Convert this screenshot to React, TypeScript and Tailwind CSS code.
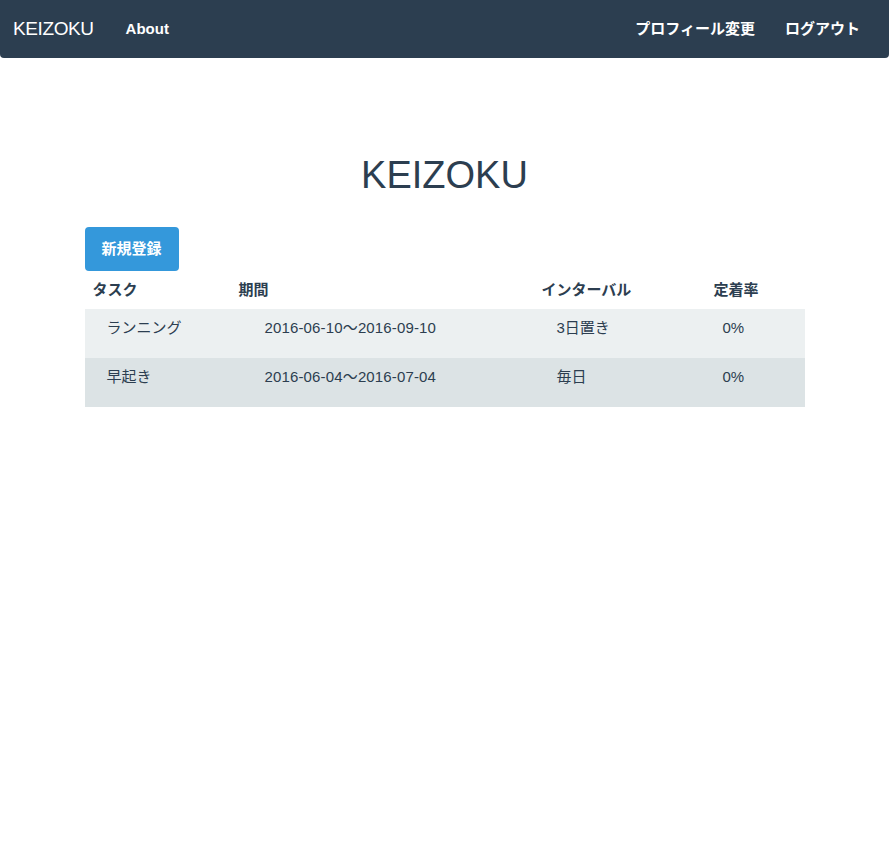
import React from 'react';

interface Task {
    name: string;
    period: string;
    interval: string;
    rate: string;
}

const tasks: Task[] = [
    { name: 'ランニング', period: '2016-06-10〜2016-09-10', interval: '3日置き', rate: '0%' },
    { name: '早起き', period: '2016-06-04〜2016-07-04', interval: '毎日', rate: '0%' },
];

const font = { fontFamily: '"Liberation Sans", "Noto Sans CJK JP", sans-serif' };

export default function App() {
    return (
        <div style={font} className="min-h-[864px] bg-white text-[15px] text-[#2c3e50]">
            {/* Navbar */}
            <nav className="flex h-[58px] items-center justify-between rounded-b-[4px] bg-[#2c3e50] pl-[13px] pr-[29px] text-white">
                <div className="flex items-center">
                    <span className="text-[19px] tracking-[-0.4px]">KEIZOKU</span>
                    <span className="ml-[32px] font-bold">About</span>
                </div>
                <div className="flex items-center gap-[30px] font-bold">
                    <span>プロフィール変更</span>
                    <span>ログアウト</span>
                </div>
            </nav>

            <div className="mx-auto w-[720px]">
                <h1 className="mt-[97px] text-center text-[38px] leading-[1.1]">KEIZOKU</h1>

                <button
                    type="button"
                    className="mt-[30px] h-[44px] rounded-[4px] bg-[#3498db] px-[17px] font-bold text-white"
                >
                    新規登録
                </button>

                {/* Table */}
                <div className="grid grid-cols-[146px_303px_172px_99px]">
                    <div className="flex h-[38px] items-center pl-[8px] font-bold">タスク</div>
                    <div className="flex h-[38px] items-center pl-[8px] font-bold">期間</div>
                    <div className="flex h-[38px] items-center pl-[8px] font-bold">インターバル</div>
                    <div className="flex h-[38px] items-center pl-[8px] font-bold">定着率</div>
                </div>
                {tasks.map((t, i) => (
                    <div
                        key={t.name}
                        className={
                            'grid h-[49px] grid-cols-[146px_303px_172px_99px] pt-[8px] leading-[21px] ' +
                            (i % 2 === 0 ? 'bg-[#ecf0f1]' : 'bg-[#dce3e5]')
                        }
                    >
                        <div className="pl-[22px]">{t.name}</div>
                        <div className="pl-[34px] tracking-[0.15px]">{t.period}</div>
                        <div className="pl-[23px]">{t.interval}</div>
                        <div className="pl-[17px]">{t.rate}</div>
                    </div>
                ))}
            </div>
        </div>
    );
}
